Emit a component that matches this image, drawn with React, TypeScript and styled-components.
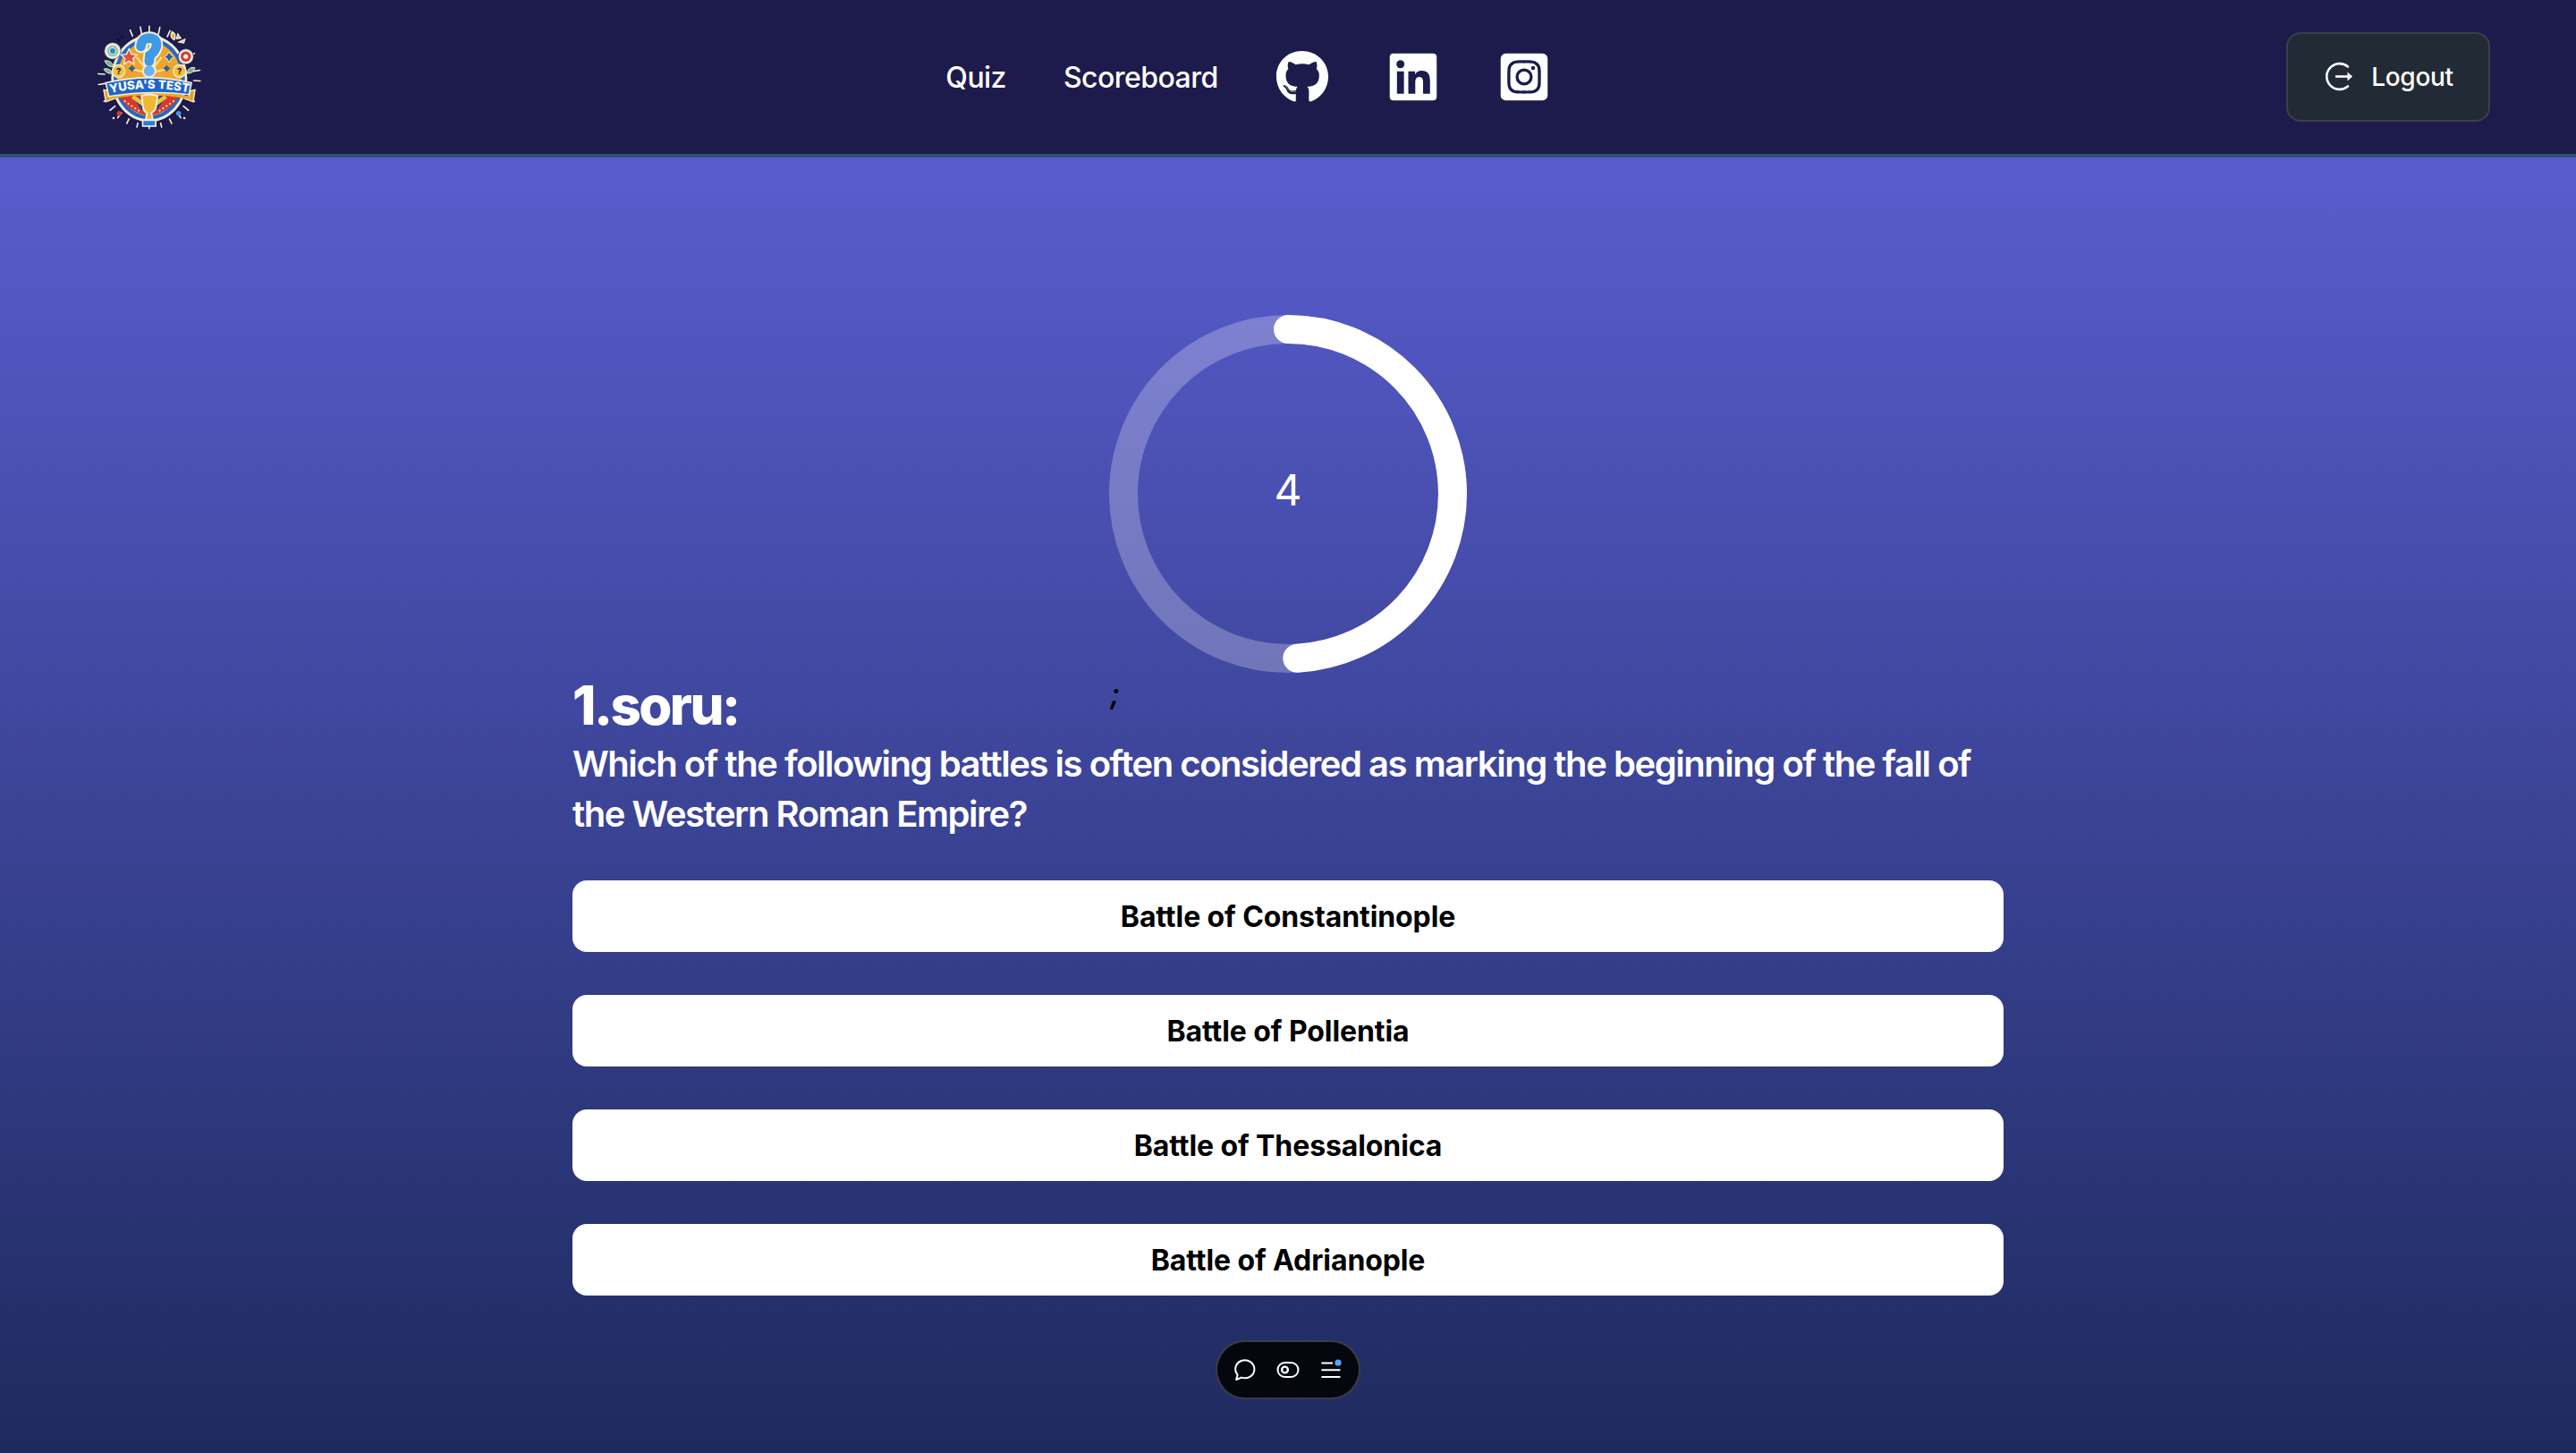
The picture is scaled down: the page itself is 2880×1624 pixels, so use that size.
import React from "react";
import styled, { createGlobalStyle } from "styled-components";
import { FaGithub, FaLinkedin, FaInstagramSquare } from "react-icons/fa";

const options = [
  "Battle of Constantinople",
  "Battle of Pollentia",
  "Battle of Thessalonica",
  "Battle of Adrianople",
];

const rayAngles = [-112, -100, -90, -78, -66, -150, -28, -8, 4, 172, 184, 28, 40, 52, 64, 76, 90, 104, 116, 128, 140, 152];

const Logo = () => (
  <LogoSvg viewBox="145 75 350 355">
    <g stroke="#f4eedb" strokeWidth="5" strokeLinecap="round">
      {rayAngles.map((a) => {
        const rad = (a * Math.PI) / 180;
        return (
          <line
            key={a}
            x1={318 + Math.cos(rad) * 150}
            y1={254 + Math.sin(rad) * 150}
            x2={318 + Math.cos(rad) * 172}
            y2={254 + Math.sin(rad) * 172}
          />
        );
      })}
    </g>
    <ellipse cx="318" cy="262" rx="134" ry="150" fill="#1d1b4b" />
    <ellipse cx="318" cy="258" rx="128" ry="146" fill="#f4eedb" />
    <ellipse cx="318" cy="258" rx="120" ry="137" fill="#2369c4" />
    <ellipse cx="318" cy="258" rx="108" ry="125" fill="#eda52d" />
    <path d="M212 300 Q230 365 318 384 Q406 365 424 300 Z" fill="#d5392f" />
    <path d="M255 310 Q290 345 380 310 L345 362 L292 362 Z" fill="#1e3f7c" />
    <path d="M262 318 L300 345 M374 318 L336 345" stroke="#e6c53f" strokeWidth="14" />
    <path d="M236 334 L292 372 M400 334 L344 372" stroke="#f4eedb" strokeWidth="6" strokeLinecap="round" strokeDasharray="1 13" />
    <path d="M318 240 L276 186 M318 240 L258 226 M318 240 L360 186 M318 240 L378 226" stroke="#f8dd8c" strokeWidth="7" />
    <circle cx="195" cy="165" r="28" fill="#f4eedb" stroke="#1d1b4b" strokeWidth="2" />
    <circle cx="195" cy="165" r="19" fill="#8cc9a9" />
    <circle cx="195" cy="165" r="11" fill="#2a8fd0" stroke="#f4eedb" strokeWidth="3" />
    <circle cx="441" cy="184" r="26" fill="#f4eedb" stroke="#1d1b4b" strokeWidth="2" />
    <circle cx="441" cy="184" r="17" fill="#d5392f" />
    <circle cx="441" cy="184" r="9" fill="#f4eedb" stroke="#d5392f" strokeWidth="2" />
    <path d="M250 158 L258 176 L277 178 L263 191 L268 209 L250 199 L233 209 L237 191 L223 178 L242 176 Z" fill="#dc4d42" stroke="#f4eedb" strokeWidth="4" />
    <path d="M385 168 L392 179 L402 185 L392 191 L385 204 L378 191 L368 185 L378 179 Z" fill="#2c5f9e" stroke="#f4eedb" strokeWidth="3" />
    <path d="M260 213 L265 219 L272 224 L265 229 L260 236 L255 229 L248 224 L255 219 Z" fill="#2c5f9e" />
    <path d="M377 213 L382 219 L389 224 L382 229 L377 236 L372 229 L365 224 L372 219 Z" fill="#2c5f9e" />
    <path d="M168 198 Q190 195 200 218 Q178 222 168 198 Z M165 226 Q185 220 195 240 Q176 245 165 226 Z" fill="#6fb389" stroke="#f4eedb" strokeWidth="3" />
    <path d="M472 222 Q452 215 444 240 Q464 244 472 222 Z" fill="#6fb389" stroke="#f4eedb" strokeWidth="3" />
    <path d="M395 100 Q412 110 402 128 Q384 118 395 100 Z M414 108 L424 122 L410 124 Z M418 135 L438 126 L434 138 Z" fill="#f1b23c" stroke="#f4eedb" strokeWidth="4" />
    <path d="M208 124 L220 132 M222 112 L230 124" stroke="#10102c" strokeWidth="6" />
    <LogoCoin cx="215" cy="233" r="21" />
    <LogoCoin cx="420" cy="233" r="21" />
    <LogoCoinMark x="215" y="243">?</LogoCoinMark>
    <LogoCoinMark x="420" y="243">?</LogoCoinMark>
    <path d="M290 150 Q292 122 320 122 Q346 124 342 150 Q338 168 320 180 L318 200" fill="none" stroke="#f4eedb" strokeWidth="44" strokeLinecap="round" />
    <circle cx="318" cy="232" r="24" fill="#f4eedb" />
    <path d="M290 150 Q292 122 320 122 Q346 124 342 150 Q338 168 320 180 L318 200" fill="none" stroke="#3f9ae6" strokeWidth="32" strokeLinecap="round" />
    <circle cx="318" cy="232" r="18" fill="#6fb2ea" />
    <path d="M165 296 L186 300 L186 322 L200 326 L172 336 Z M472 296 L452 300 L452 322 L438 326 L466 336 Z" fill="#e2a026" stroke="#f4eedb" strokeWidth="4" />
    <path d="M186 322 Q318 296 452 322" fill="none" stroke="#eaa825" strokeWidth="10" />
    <path d="M172 272 Q318 238 460 272 L452 312 Q318 296 182 318 Z" fill="#1f64c8" stroke="#f4eedb" strokeWidth="5" />
    <path id="logo-banner-text" d="M182 308 Q318 276 456 306" fill="none" />
    <LogoBannerText>
      <textPath href="#logo-banner-text" startOffset="50%" textAnchor="middle">
        YUSA'S TEST
      </textPath>
    </LogoBannerText>
    <path d="M292 316 Q318 306 346 316 L340 358 Q334 370 325 374 L330 396 L306 396 L311 374 Q302 370 298 358 Z" fill="#f2b732" stroke="#f4eedb" strokeWidth="6" />
    <rect x="296" y="398" width="44" height="20" fill="#2a7dd0" stroke="#f4eedb" strokeWidth="5" />
    <circle cx="217" cy="375" r="8" fill="#d5392f" />
    <circle cx="417" cy="375" r="8" fill="#3f9adf" />
    <circle cx="198" cy="391" r="4" fill="#f4eedb" />
    <circle cx="436" cy="391" r="4" fill="#f4eedb" />
  </LogoSvg>
);

const LogoutIcon = () => (
  <svg width="36" height="36" viewBox="0 0 36 36" fill="none" stroke="#fff" strokeWidth="2.6">
    <path d="M28 6.5 A14.4 14.4 0 1 0 28 28.5" strokeLinecap="round" />
    <path d="M14 17.5 H32" />
    <path d="M27.5 12.5 L33 17.5 L27.5 22.5 Z" fill="#fff" stroke="none" />
  </svg>
);

const ChatIcon = () => (
  <svg width="26" height="26" viewBox="0 0 26 26" fill="none" stroke="#fff" strokeWidth="2">
    <path d="M3.2 24 L4.6 18.6 A10.6 10 0 1 1 9 21.6 Z" strokeLinejoin="round" />
  </svg>
);

const ToggleIcon = () => (
  <svg width="26" height="26" viewBox="0 0 26 26" fill="none" stroke="#fff" strokeWidth="2">
    <rect x="1.5" y="5" width="23" height="16" rx="8" />
    <circle cx="9.5" cy="13" r="3.4" strokeWidth="2.4" />
  </svg>
);

const MenuIcon = () => (
  <svg width="26" height="26" viewBox="0 0 26 26" fill="none" stroke="#fff" strokeWidth="2">
    <path d="M2.4 5.5 H15 M2.4 13.2 H23.5 M2.4 21 H23.5" />
    <circle cx="21" cy="5" r="3.6" fill="#5aa2f5" stroke="none" />
  </svg>
);

export default function App() {
  return (
    <>
      <GlobalStyle />
      <Page>
        <Header>
          <Logo />
          <Nav>
            <NavLink>Quiz</NavLink>
            <NavLink>Scoreboard</NavLink>
            <FaGithub size={60} color="#fff" />
            <FaLinkedin size={60} color="#fff" />
            <FaInstagramSquare size={60} color="#fff" />
          </Nav>
          <LogoutButton>
            <LogoutIcon />
            Logout
          </LogoutButton>
        </Header>
        <Main>
          <Timer>
            <svg width="400" height="400" viewBox="0 0 400 400">
              <TimerTrack cx="200" cy="200" r="184" />
              <TimerValue cx="200" cy="200" r="184" pathLength={100} strokeDasharray="49.1 100" />
            </svg>
            <TimerNumber>4</TimerNumber>
          </Timer>
          <Quiz>
            <TitleRow>
              <Title>1.soru:</Title>
              <Stray>;</Stray>
            </TitleRow>
            <Question>
              Which of the following battles is often considered as marking the beginning of the fall of the Western
              Roman Empire?
            </Question>
            <Options>
              {options.map((o) => (
                <Option key={o}>{o}</Option>
              ))}
            </Options>
          </Quiz>
        </Main>
        <Toolbar>
          <ChatIcon />
          <ToggleIcon />
          <MenuIcon />
        </Toolbar>
      </Page>
    </>
  );
}

const GlobalStyle = createGlobalStyle`
  html, body {
    margin: 0;
    padding: 0;
  }
  body {
    font-family: Inter, "Liberation Sans", sans-serif;
    background: #1e2a5e;
  }
`;

const Page = styled.div`
  position: relative;
  width: 2880px;
  height: 1624px;
  overflow: hidden;
  background: linear-gradient(180deg, #6063dc 0%, #1e2a5e 100%);
`;

const Header = styled.header`
  display: flex;
  align-items: center;
  justify-content: space-between;
  box-sizing: border-box;
  height: 176px;
  padding: 0 96px 0 109px;
  background: #1d1b4b;
  border-bottom: 4px solid #2b5570;
`;

const LogoSvg = styled.svg`
  width: 117px;
  height: 118px;
  margin-right: 9px;
  flex: none;
`;

const LogoCoin = styled.circle`
  fill: #f3c136;
  stroke: #f4eedb;
  stroke-width: 4;
`;

const LogoCoinMark = styled.text`
  font-family: Inter, sans-serif;
  font-weight: 800;
  font-size: 28px;
  text-anchor: middle;
  fill: #1d1b4b;
`;

const LogoBannerText = styled.text`
  font-family: Inter, sans-serif;
  font-weight: 800;
  font-size: 40px;
  fill: #fff;
`;

const Nav = styled.nav`
  display: flex;
  align-items: center;
  gap: 64px;
`;

const NavLink = styled.a`
  color: #fff;
  font-size: 32px;
  font-weight: 500;
  letter-spacing: -0.55px;
`;

const LogoutButton = styled.button`
  display: flex;
  align-items: center;
  justify-content: center;
  gap: 18px;
  width: 228px;
  height: 100px;
  padding: 0;
  color: #fff;
  background: #222a35;
  border: 2px solid #3b404c;
  border-radius: 16px;
  font-family: inherit;
  font-size: 28px;
  font-weight: 500;
  letter-spacing: -0.3px;
`;

const Main = styled.main`
  display: flex;
  flex-direction: column;
  align-items: center;
  padding-top: 176px;
`;

const Timer = styled.div`
  display: grid;
  place-items: center;
  width: 400px;
  height: 400px;

  & > * {
    grid-area: 1 / 1;
  }
`;

const TimerTrack = styled.circle`
  fill: none;
  stroke: rgba(255, 255, 255, 0.25);
  stroke-width: 32;
`;

const TimerValue = styled.circle`
  fill: none;
  stroke: #fff;
  stroke-width: 32;
  stroke-linecap: round;
  transform: rotate(-90deg);
  transform-origin: 200px 200px;
`;

const TimerNumber = styled.span`
  color: #fff;
  font-size: 48px;
  line-height: 1;
  margin-bottom: 8px;
`;

const Quiz = styled.section`
  width: 1600px;
`;

const TitleRow = styled.div`
  display: flex;
  align-items: flex-start;
`;

const Title = styled.h1`
  margin: 0;
  color: #fff;
  font-size: 60px;
  font-weight: 800;
  line-height: 72px;
  letter-spacing: -2.6px;
`;

const Stray = styled.span`
  margin-left: 416px;
  padding-top: 4px;
  color: #000;
  font-size: 32px;
  font-style: italic;
  font-weight: 600;
  line-height: 40px;
`;

const Question = styled.p`
  margin: 2px 0 0;
  color: #fff;
  font-size: 40px;
  font-weight: 600;
  line-height: 56px;
  letter-spacing: -1.46px;
`;

const Options = styled.div`
  display: flex;
  flex-direction: column;
  gap: 48px;
  margin-top: 46px;
`;

const Option = styled.button`
  height: 80px;
  padding: 0;
  color: #000;
  background: #fff;
  border: none;
  border-radius: 16px;
  font-family: inherit;
  font-size: 32px;
  font-weight: 700;
  letter-spacing: -0.1px;
`;

const Toolbar = styled.div`
  position: absolute;
  left: 1359px;
  bottom: 60px;
  display: flex;
  align-items: center;
  justify-content: center;
  gap: 22px;
  box-sizing: border-box;
  width: 162px;
  height: 66px;
  background: #05070f;
  border: 2px solid rgba(255, 255, 255, 0.22);
  border-radius: 33px;
`;
